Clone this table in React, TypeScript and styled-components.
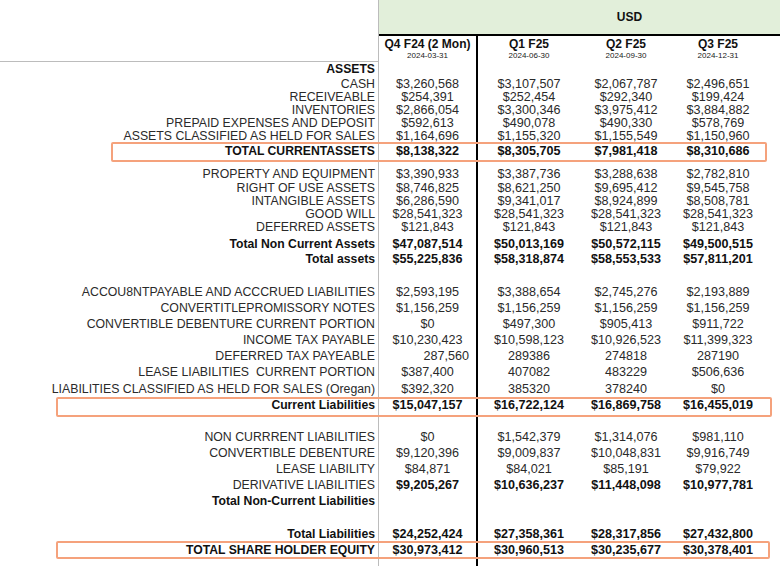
import React from "react";
import styled, { createGlobalStyle } from "styled-components";

const Global = createGlobalStyle`
  html, body { margin: 0; padding: 0; background: #ffffff; }
  body { font-family: "Liberation Sans", Arial, sans-serif; color: #222; }
`;

const COLS = "379px 99px 102px 92px 92px 1fr";

const Sheet = styled.div`
  width: 780px;
  height: 566px;
  overflow: hidden;
  display: flex;
  flex-direction: column;
  background: #fff;
`;

const Row = styled.div<{ $h: number }>`
  position: relative;
  display: grid;
  grid-template-columns: ${COLS};
  height: ${(p) => p.$h}px;
  flex: none;
`;

const FillRow = styled(Row)`
  flex: 1 1 auto;
`;

const Label = styled.div<{ $bold?: boolean; $pb?: number; $rule?: boolean }>`
  display: flex;
  align-items: center;
  justify-content: flex-end;
  padding: 0 3px ${(p) => p.$pb ?? 0}px 0;
  border-right: 1px solid #bcbcbc;
  border-bottom: ${(p) => (p.$rule ? "1px solid #bcbcbc" : "none")};
  font-size: ${(p) => (p.$bold ? "12.2px" : "12.3px")};
  font-weight: ${(p) => (p.$bold ? 700 : 400)};
  color: ${(p) => (p.$bold ? "#111" : "#2a2a2a")};
  white-space: pre;
  line-height: 14px;
`;

const Value = styled.div<{ $bold?: boolean; $pb?: number; $divider?: boolean; $right?: boolean }>`
  display: flex;
  align-items: center;
  justify-content: ${(p) => (p.$right ? "flex-end" : "center")};
  padding: 0 ${(p) => (p.$right ? 7 : 0)}px ${(p) => p.$pb ?? 0}px 0;
  border-right: ${(p) => (p.$divider ? "2px solid #000" : "none")};
  font-size: 12.6px;
  font-weight: ${(p) => (p.$bold ? 700 : 400)};
  color: ${(p) => (p.$bold ? "#111" : "#2a2a2a")};
  white-space: pre;
  line-height: 14px;
`;

const Blank = styled.div``;

const GreenBand = styled.div`
  grid-column: 2 / -1;
  background: #e2efda;
  border-bottom: 2px solid #000;
  display: flex;
  align-items: center;
  justify-content: center;
  padding-left: 100px;
  font-size: 12px;
  font-weight: 700;
  color: #111;
`;

const PeriodCell = styled.div<{ $divider?: boolean }>`
  display: flex;
  flex-direction: column;
  align-items: center;
  justify-content: center;
  border-right: ${(p) => (p.$divider ? "2px solid #000" : "none")};
`;

const PeriodTitle = styled.div`
  font-size: 12px;
  font-weight: 700;
  line-height: 13px;
  color: #111;
`;

const PeriodDate = styled.div`
  font-size: 8px;
  line-height: 10px;
  color: #222;
`;

const Highlight = styled.div<{ $left: number; $right: number }>`
  position: absolute;
  top: 0;
  bottom: 0;
  left: ${(p) => p.$left}px;
  right: ${(p) => p.$right}px;
  border: 2px solid #f5a27c;
  border-radius: 2px;
  pointer-events: none;
  z-index: 2;
`;

type Line = {
  label?: string;
  v?: string[];
  h: number;
  bold?: boolean;
  box?: [number, number];
  pb?: number;
  rightFirst?: boolean;
};

const lines: Line[] = [
  { label: "ASSETS", h: 14.5, bold: true, v: ["", "", "", ""] },
  { label: "CASH", h: 13.2, v: ["$3,260,568", "$3,107,507", "$2,067,787", "$2,496,651"] },
  { label: "RECEIVEABLE", h: 13.2, v: ["$254,391", "$252,454", "$292,340", "$199,424"] },
  { label: "INVENTORIES", h: 13.2, v: ["$2,866,054", "$3,300,346", "$3,975,412", "$3,884,882"] },
  { label: "PREPAID EXPENSES AND DEPOSIT", h: 13.2, v: ["$592,613", "$490,078", "$490,330", "$578,769"] },
  { label: "ASSETS CLASSIFIED AS HELD FOR SALES", h: 13.2, v: ["$1,164,696", "$1,155,320", "$1,155,549", "$1,150,960"] },
  { label: "TOTAL CURRENTASSETS", h: 20, bold: true, pb: 3, box: [111, 13], v: ["$8,138,322", "$8,305,705", "$7,981,418", "$8,310,686"] },
  { h: 4.9 },
  { label: "PROPERTY AND EQUIPMENT", h: 13.25, v: ["$3,390,933", "$3,387,736", "$3,288,638", "$2,782,810"] },
  { label: "RIGHT OF USE ASSETS", h: 13.25, v: ["$8,746,825", "$8,621,250", "$9,695,412", "$9,545,758"] },
  { label: "INTANGIBLE ASSETS", h: 13.25, v: ["$6,286,590", "$9,341,017", "$8,924,899", "$8,508,781"] },
  { label: "GOOD WILL", h: 13.25, v: ["$28,541,323", "$28,541,323", "$28,541,323", "$28,541,323"] },
  { label: "DEFERRED ASSETS", h: 13.25, v: ["$121,843", "$121,843", "$121,843", "$121,843"] },
  { h: 2.85 },
  { label: "Total Non Current Assets", h: 15, bold: true, v: ["$47,087,514", "$50,013,169", "$50,572,115", "$49,500,515"] },
  { label: "Total assets", h: 15, bold: true, v: ["$55,225,836", "$58,318,874", "$58,553,533", "$57,811,201"] },
  { h: 17.5 },
  { label: "ACCOU8NTPAYABLE AND ACCCRUED LIABILITIES", h: 16.1, v: ["$2,593,195", "$3,388,654", "$2,745,276", "$2,193,889"] },
  { label: "CONVERTITLEPROMISSORY NOTES", h: 16.1, v: ["$1,156,259", "$1,156,259", "$1,156,259", "$1,156,259"] },
  { label: "CONVERTIBLE DEBENTURE CURRENT PORTION", h: 16.1, v: ["$0", "$497,300", "$905,413", "$911,722"] },
  { label: "INCOME TAX PAYABLE", h: 16.1, v: ["$10,230,423", "$10,598,123", "$10,926,523", "$11,399,323"] },
  { label: "DEFERRED TAX PAYEABLE", h: 16.1, rightFirst: true, v: ["287,560", "289386", "274818", "287190"] },
  { label: "LEASE LIABILITIES  CURRENT PORTION", h: 16.1, v: ["$387,400", "407082", "483229", "$506,636"] },
  { label: "LIABILITIES CLASSIFIED AS HELD FOR SALES (Oregan)", h: 16.1, v: ["$392,320", "385320", "378240", "$0"] },
  { label: "Current Liabilities", h: 20, bold: true, pb: 3, box: [56, 8], v: ["$15,047,157", "$16,722,124", "$16,869,758", "$16,455,019"] },
  { h: 12.3 },
  { label: "NON CURRRENT LIABILITIES", h: 16.1, v: ["$0", "$1,542,379", "$1,314,076", "$981,110"] },
  { label: "CONVERTIBLE DEBENTURE", h: 16.1, v: ["$9,120,396", "$9,009,837", "$10,048,831", "$9,916,749"] },
  { label: "LEASE LIABILITY", h: 16.1, v: ["$84,871", "$84,021", "$85,191", "$79,922"] },
  { label: "DERIVATIVE LIABILITIES", h: 16.1, boldValues: true, v: ["$9,205,267", "$10,636,237", "$11,448,098", "$10,977,781"] } as Line & { boldValues?: boolean },
  { label: "Total Non-Current Liabilities", h: 16.1, bold: true, v: ["", "", "", ""] },
  { h: 17.5 },
  { label: "Total Liabilities", h: 14, bold: true, v: ["$24,252,424", "$27,358,361", "$28,317,856", "$27,432,800"] },
  { label: "TOTAL SHARE HOLDER EQUITY", h: 18, bold: true, box: [56, 10], v: ["$30,973,412", "$30,960,513", "$30,235,677", "$30,378,401"] },
];

const periods = [
  { t: "Q4 F24 (2 Mon)", d: "2024-03-31" },
  { t: "Q1 F25", d: "2024-06-30" },
  { t: "Q2 F25", d: "2024-09-30" },
  { t: "Q3 F25", d: "2024-12-31" },
];

function EmptyCells() {
  return (
    <>
      <Label />
      <Value $divider />
      <Blank />
      <Blank />
      <Blank />
      <Blank />
    </>
  );
}

export default function App() {
  return (
    <>
      <Global />
      <Sheet>
        <Row $h={36}>
          <Label />
          <GreenBand>USD</GreenBand>
        </Row>
        <Row $h={26}>
          <Label $rule />
          {periods.map((p, i) => (
            <PeriodCell key={p.t} $divider={i === 0}>
              <PeriodTitle>{p.t}</PeriodTitle>
              <PeriodDate>{p.d}</PeriodDate>
            </PeriodCell>
          ))}
          <Blank />
        </Row>
        {lines.map((l, idx) => {
          if (!l.label) {
            return (
              <Row key={idx} $h={l.h}>
                <EmptyCells />
              </Row>
            );
          }
          const bv = l.bold || (l as Line & { boldValues?: boolean }).boldValues;
          return (
            <Row key={idx} $h={l.h}>
              <Label $bold={l.bold} $pb={l.pb}>{l.label}</Label>
              {(l.v ?? ["", "", "", ""]).map((val, i) => (
                <Value
                  key={i}
                  $bold={bv}
                  $pb={l.pb}
                  $divider={i === 0}
                  $right={i === 0 && l.rightFirst}
                >
                  {val}
                </Value>
              ))}
              <Blank />
              {l.box && <Highlight $left={l.box[0]} $right={l.box[1]} />}
            </Row>
          );
        })}
        <FillRow $h={0}>
          <EmptyCells />
        </FillRow>
      </Sheet>
    </>
  );
}
